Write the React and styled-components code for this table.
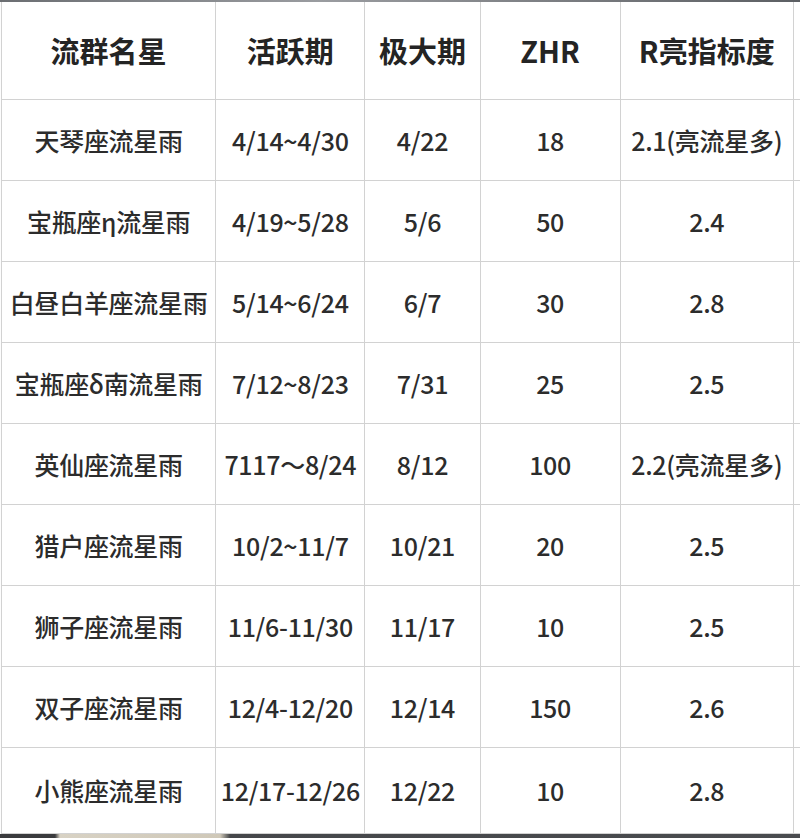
import React from 'react';
import styled, { createGlobalStyle } from 'styled-components';

const GlobalStyle = createGlobalStyle`
	html, body {
		margin: 0;
		padding: 0;
		background: #ffffff;
	}
	body {
		font-family: "Noto Sans CJK SC", "Noto Sans", sans-serif;
		color: #2b2b2b;
	}
`;

const columns = [
	{ key: 'name', title: '流群名星', width: 214 },
	{ key: 'active', title: '活跃期', width: 149 },
	{ key: 'peak', title: '极大期', width: 115 },
	{ key: 'zhr', title: 'ZHR', width: 140 },
	{ key: 'r', title: 'R亮指标度', width: 173 },
	// next column is cut off by the right edge of the screenshot
	{ key: 'more', title: '', width: 120 },
];

const rows = [
	['天琴座流星雨', '4/14~4/30', '4/22', '18', '2.1(亮流星多)', ''],
	['宝瓶座η流星雨', '4/19~5/28', '5/6', '50', '2.4', ''],
	['白昼白羊座流星雨', '5/14~6/24', '6/7', '30', '2.8', ''],
	['宝瓶座δ南流星雨', '7/12~8/23', '7/31', '25', '2.5', ''],
	['英仙座流星雨', '7117～8/24', '8/12', '100', '2.2(亮流星多)', ''],
	['猎户座流星雨', '10/2~11/7', '10/21', '20', '2.5', ''],
	['狮子座流星雨', '11/6-11/30', '11/17', '10', '2.5', ''],
	['双子座流星雨', '12/4-12/20', '12/14', '150', '2.6', ''],
	['小熊座流星雨', '12/17-12/26', '12/22', '10', '2.8', ''],
];

const App = () => {
	return (
		<Page>
			<GlobalStyle />
			<Strip />
			<Table>
				<colgroup>
					{columns.map((c) => (
						<col key={c.key} style={{ width: c.width }} />
					))}
				</colgroup>
				<thead>
					<HeadRow>
						{columns.map((c) => (
							<HeadCell key={c.key}>{c.title}</HeadCell>
						))}
					</HeadRow>
				</thead>
				<tbody>
					{rows.map((r, i) => (
						<BodyRow key={r[0]} $last={i === rows.length - 1}>
							{r.map((v, j) => (
								<Cell key={j}>{v}</Cell>
							))}
						</BodyRow>
					))}
				</tbody>
			</Table>
			<BottomStrip />
		</Page>
	);
};

const Page = styled.div`
	width: 800px;
	height: 838px;
	overflow: hidden;
	display: flex;
	flex-direction: column;
	background: #fdfdfd;
`;

const Strip = styled.div`
	height: 2px;
	background: linear-gradient(90deg, #6b6e72, #9a9ca0 40%, #5c5f63);
	flex: none;
`;

const BottomStrip = styled.div`
	flex: 1;
	background: linear-gradient(
		90deg,
		#3a3b3d 0,
		#3a3b3d 55px,
		#d8d2c4 60px,
		#cfc8b8 220px,
		#45474a 230px,
		#4a4c4f 100%
	);
`;

const Table = styled.table`
	border-collapse: collapse;
	table-layout: fixed;
	width: 913px;
	min-width: 913px;
	margin-left: 1px;
	background: #ffffff;
	flex: none;
`;

const HeadRow = styled.tr`
	height: 97px;
`;

const BodyRow = styled.tr`
	height: ${(p) => (p.$last ? '86px' : '81px')};
`;

const HeadCell = styled.th`
	border: 1px solid #d2d2d2;
	border-top: none;
	text-align: center;
	vertical-align: middle;
	font-size: 29px;
	font-weight: 700;
	color: #242424;
	padding: 0;
	white-space: nowrap;
`;

const Cell = styled.td`
	border: 1px solid #d2d2d2;
	text-align: center;
	vertical-align: middle;
	font-size: 25px;
	font-weight: 500;
	color: #2c2c2c;
	padding: 0;
	white-space: nowrap;
	letter-spacing: -0.3px;
`;

export default App;
